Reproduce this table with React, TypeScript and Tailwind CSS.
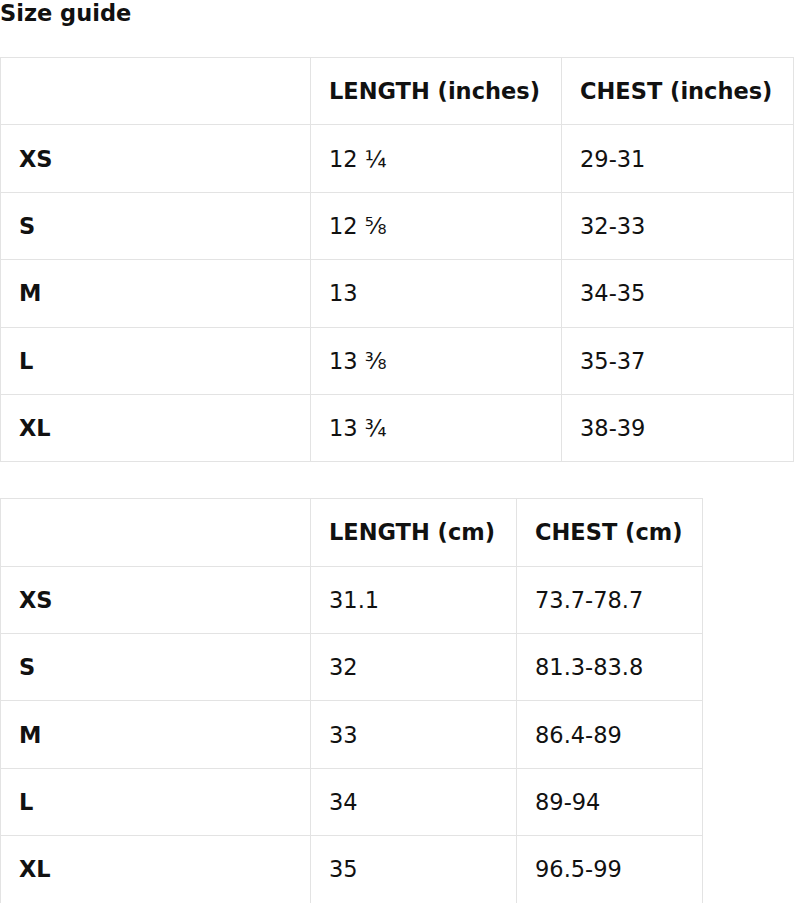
const inches = [
  ['XS', '12 ¼', '29-31'],
  ['S', '12 ⅝', '32-33'],
  ['M', '13', '34-35'],
  ['L', '13 ⅜', '35-37'],
  ['XL', '13 ¾', '38-39'],
];

const cm = [
  ['XS', '31.1', '73.7-78.7'],
  ['S', '32', '81.3-83.8'],
  ['M', '33', '86.4-89'],
  ['L', '34', '89-94'],
  ['XL', '35', '96.5-99'],
];

function SizeTable({
  heads,
  rows,
  cols,
  width,
}: {
  heads: string[];
  rows: string[][];
  cols: number[];
  width: string;
}) {
  const cell = 'border border-[#e3e3e3] pl-[18px] pr-2 py-[16.2px] text-left leading-[34px] whitespace-nowrap';
  return (
    <table className={`table-fixed border-collapse ${width}`}>
      <colgroup>
        {cols.map((w, i) => (
          <col key={i} style={{ width: w }} />
        ))}
      </colgroup>
      <thead>
        <tr>
          <th className={cell}></th>
          {heads.map((h) => (
            <th key={h} className={`${cell} font-bold`}>
              {h}
            </th>
          ))}
        </tr>
      </thead>
      <tbody>
        {rows.map(([size, len, chest]) => (
          <tr key={size}>
            <td className={`${cell} font-bold`}>{size}</td>
            <td className={`${cell} font-normal`}>{len}</td>
            <td className={`${cell} font-normal`}>{chest}</td>
          </tr>
        ))}
      </tbody>
    </table>
  );
}

export default function App() {
  return (
    <div className="min-h-screen bg-white font-['DejaVu_Sans',sans-serif] text-[22.5px] text-[#111]">
      <h2 className="mb-[31px] font-bold leading-[26px]">Size guide</h2>
      <SizeTable
        heads={['LENGTH (inches)', 'CHEST (inches)']}
        rows={inches}
        cols={[310, 251, 232]}
        width="w-[793px]"
      />
      <div className="mt-[36px]">
        <SizeTable
          heads={['LENGTH (cm)', 'CHEST (cm)']}
          rows={cm}
          cols={[310, 206, 186]}
          width="w-[702px]"
        />
      </div>
    </div>
  );
}
